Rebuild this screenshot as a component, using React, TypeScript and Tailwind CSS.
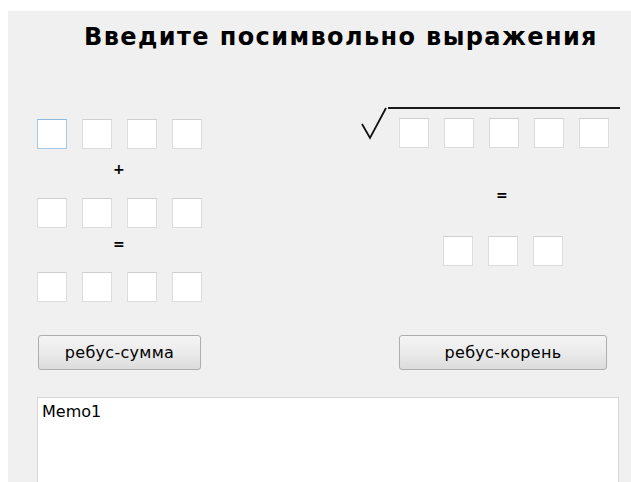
import React from 'react';

const FONT = { fontFamily: '"DejaVu Sans", "Liberation Sans", sans-serif' };

const Cell: React.FC<{ focused?: boolean }> = ({ focused }) => (
  <div
    className={`h-[30px] w-[30px] shrink-0 bg-white border ${
      focused ? 'border-[#a6c9e8] border-t-[#8fb8de]' : 'border-[#dcdcdc] border-t-[#cfcfcf]'
    }`}
  />
);

const CellRow: React.FC<{ count: number; focusFirst?: boolean }> = ({ count, focusFirst }) => (
  <div className="flex gap-[15px]">
    {Array.from({ length: count }).map((_, i) => (
      <Cell key={i} focused={focusFirst && i === 0} />
    ))}
  </div>
);

const Button: React.FC<{ label: string; width: string }> = ({ label, width }) => (
  <button
    className={`${width} h-[35px] rounded-[3px] border border-[#adadad] bg-gradient-to-b from-[#f4f4f4] via-[#ebebeb] to-[#dcdcdc] text-[16px] tracking-[0.3px] text-black`}
    style={FONT}
  >
    {label}
  </button>
);

export default function App() {
  return (
    <div className="h-[482px] w-[631px] overflow-hidden bg-white pl-[8px] pt-[11px]">
      <div className="h-full overflow-hidden bg-[#f0f0f0]" style={FONT}>
        {/* heading */}
        <h1 className="pl-[76px] pt-[12px] text-[24px] font-bold leading-[28px] tracking-[1.4px] text-black">
          Введите посимвольно выражения
        </h1>

        <div className="mt-[55px] flex items-start">
          {/* sum puzzle */}
          <div className="ml-[29px] flex w-[165px] flex-col pt-[13px]">
            <CellRow count={4} focusFirst />
            <div className="flex h-[49px] items-center pl-[76px] pb-[8px] text-[14px] font-bold">+</div>
            <CellRow count={4} />
            <div className="flex h-[44px] items-center pl-[76px] pb-[12px] text-[14px] font-bold">=</div>
            <CellRow count={4} />
          </div>

          {/* root puzzle */}
          <div className="ml-[158px] flex flex-col">
            <div className="flex items-start">
              <svg width="28" height="34" viewBox="0 0 28 34" className="shrink-0">
                <path d="M2 18 L10 32 L26 2" fill="none" stroke="#111" strokeWidth="1.8" />
              </svg>
              <div className="mt-[1px] w-[232px] border-t-2 border-[#1a1a1a] pl-[11px] pt-[9px]">
                <CellRow count={5} />
              </div>
            </div>
            <div className="flex h-[88px] items-center pl-[136px] pt-[6px] text-[14px] font-bold">=</div>
            <div className="pl-[83px]">
              <CellRow count={3} />
            </div>
          </div>
        </div>

        {/* actions */}
        <div className="mt-[33px] flex">
          <div className="ml-[30px]">
            <Button label="ребус-сумма" width="w-[163px]" />
          </div>
          <div className="ml-[198px]">
            <Button label="ребус-корень" width="w-[208px]" />
          </div>
        </div>

        {/* output */}
        <div className="ml-[29px] mt-[27px] h-[120px] w-[582px] border border-[#d6d6d6] bg-white px-[4px] pt-[2px] text-[16px] text-black">
          Memo1
        </div>
      </div>
    </div>
  );
}
